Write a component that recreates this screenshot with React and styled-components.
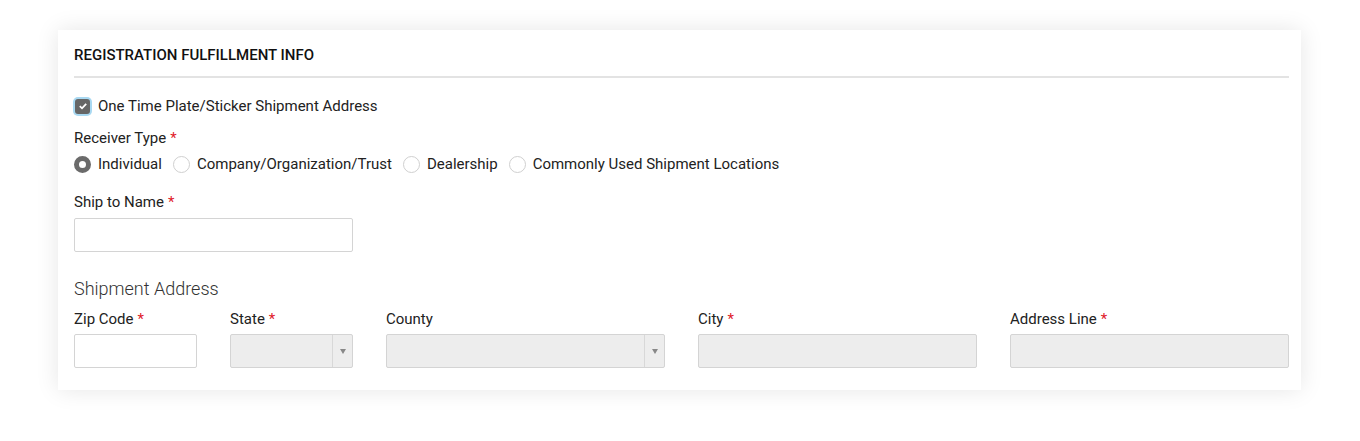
import React from "react";
import styled, { createGlobalStyle } from "styled-components";

const GlobalStyle = createGlobalStyle`
  body {
    margin: 0;
    background: #fff;
    font-family: Roboto, "Liberation Sans", sans-serif;
    color: #222;
  }
`;

const Page = styled.div`
  padding: 30px 59px 50px 58px;
`;

const Card = styled.div`
  background: #fff;
  box-shadow: 0 0 22px rgba(0, 0, 0, 0.1);
  padding: 14px 12px 22px 16px;
`;

const Title = styled.h2`
  margin: 0;
  font-size: 15px;
  font-weight: 500;
  line-height: 20px;
  padding: 1px 0 11px;
  border-bottom: 2px solid #e3e3e3;
  color: #111;
`;

const CheckRow = styled.label`
  display: flex;
  align-items: center;
  gap: 8px;
  margin-top: 18px;
  font-size: 15px;
  line-height: 20px;
`;

const CheckBox = styled.span`
  width: 15px;
  height: 15px;
  border-radius: 3px;
  background: #666;
  box-shadow: 0 0 0 2px #a9d9f2;
  display: flex;
  align-items: center;
  justify-content: center;
  margin-left: 1px;
`;

const Field = styled.div`
  margin-top: ${(p) => p.$top || 0}px;
`;

const Label = styled.div`
  font-size: 15px;
  line-height: 20px;
  color: #222;
`;

const Star = styled.span`
  color: #e0202a;
  margin-left: 4px;
`;

const RadioGroup = styled.div`
  display: flex;
  align-items: center;
  gap: 11px;
  margin-top: 6px;
`;

const RadioItem = styled.label`
  display: flex;
  align-items: center;
  gap: 7px;
  font-size: 15px;
  line-height: 20px;
`;

const RadioCircle = styled.span`
  width: 17px;
  height: 17px;
  border-radius: 50%;
  box-sizing: border-box;
  border: ${(p) => (p.$on ? "5.5px solid #6b6b6b" : "1px solid #d0d0d0")};
  background: #fff;
`;

const TextInput = styled.div`
  box-sizing: border-box;
  height: 34px;
  width: ${(p) => p.$w || "100%"};
  border: 1px solid #d4d4d4;
  border-radius: 2px;
  background: ${(p) => (p.$disabled ? "#ededed" : "#fff")};
  margin-top: ${(p) => p.$mt ?? 5}px;
`;

const SelectBox = styled.div`
  box-sizing: border-box;
  height: 34px;
  border: 1px solid #d4d4d4;
  border-radius: 2px;
  background: #ededed;
  margin-top: 5px;
  display: flex;
  justify-content: flex-end;
`;

const Arrow = styled.div`
  width: 19px;
  border-left: 1px solid #d8d8d8;
  display: flex;
  align-items: center;
  justify-content: center;
  &::after {
    content: "";
    border-left: 3.5px solid transparent;
    border-right: 3.5px solid transparent;
    border-top: 5px solid #888;
  }
`;

const SectionTitle = styled.div`
  font-size: 18px;
  font-weight: 300;
  color: #333;
  margin-top: 26px;
  line-height: 22px;
`;

const AddressGrid = styled.div`
  display: grid;
  grid-template-columns: repeat(8, 1fr);
  column-gap: 33px;
  margin-top: 9px;
`;

const Col = styled.div`
  grid-column: span ${(p) => p.$span || 1};
`;

export default function App() {
  return (
    <>
      <GlobalStyle />
      <Page>
        <Card>
          <Title>REGISTRATION FULFILLMENT INFO</Title>
          <CheckRow>
            <CheckBox>
              <svg width="10" height="10" viewBox="0 0 10 10">
                <path d="M1.8 5.2 L4 7.3 L8.2 2.8" fill="none" stroke="#fff" strokeWidth="1.8" />
              </svg>
            </CheckBox>
            One Time Plate/Sticker Shipment Address
          </CheckRow>
          <Field $top={12}>
            <Label>
              Receiver Type<Star>*</Star>
            </Label>
            <RadioGroup>
              <RadioItem>
                <RadioCircle $on />
                Individual
              </RadioItem>
              <RadioItem>
                <RadioCircle />
                Company/Organization/Trust
              </RadioItem>
              <RadioItem>
                <RadioCircle />
                Dealership
              </RadioItem>
              <RadioItem>
                <RadioCircle />
                Commonly Used Shipment Locations
              </RadioItem>
            </RadioGroup>
          </Field>
          <Field $top={18}>
            <Label>
              Ship to Name<Star>*</Star>
            </Label>
            <TextInput $w="279px" $mt={6} />
          </Field>
          <SectionTitle>Shipment Address</SectionTitle>
          <AddressGrid>
            <Col>
              <Label>
                Zip Code<Star>*</Star>
              </Label>
              <TextInput />
            </Col>
            <Col>
              <Label>
                State<Star>*</Star>
              </Label>
              <SelectBox>
                <Arrow />
              </SelectBox>
            </Col>
            <Col $span={2}>
              <Label>County</Label>
              <SelectBox>
                <Arrow />
              </SelectBox>
            </Col>
            <Col $span={2}>
              <Label>
                City<Star>*</Star>
              </Label>
              <TextInput $disabled />
            </Col>
            <Col $span={2}>
              <Label>
                Address Line<Star>*</Star>
              </Label>
              <TextInput $disabled />
            </Col>
          </AddressGrid>
        </Card>
      </Page>
    </>
  );
}
